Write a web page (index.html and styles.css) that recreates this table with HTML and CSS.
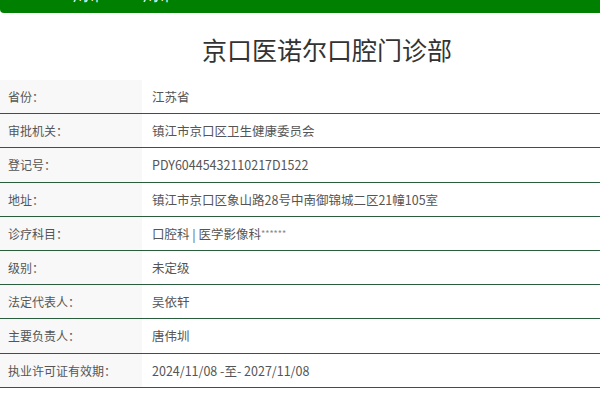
FILE: index.html
```html
<!DOCTYPE html>
<html lang="zh-CN">
<head>
<meta charset="utf-8">
<title>京口医诺尔口腔门诊部</title>
<link rel="stylesheet" href="styles.css">
</head>
<body>
<header class="topbar">
  <nav class="nav">
    <span class="nav-item nav-a">川川</span>
    <span class="nav-item nav-b">川川</span>
  </nav>
</header>
<h1 class="title">京口医诺尔口腔门诊部</h1>
<table class="info">
  <tbody>
    <tr><th>省份：</th><td>江苏省</td></tr>
    <tr><th>审批机关：</th><td>镇江市京口区卫生健康委员会</td></tr>
    <tr><th>登记号：</th><td>PDY60445432110217D1522</td></tr>
    <tr><th>地址：</th><td>镇江市京口区象山路28号中南御锦城二区21幢105室</td></tr>
    <tr><th>诊疗科目：</th><td>口腔科 | 医学影像科<span class="stars">******</span></td></tr>
    <tr><th>级别：</th><td>未定级</td></tr>
    <tr><th>法定代表人：</th><td>吴依轩</td></tr>
    <tr><th>主要负责人：</th><td>唐伟圳</td></tr>
    <tr><th>执业许可证有效期：</th><td>2024/11/08 -至- 2027/11/08</td></tr>
  </tbody>
</table>
</body>
</html>
```
FILE: styles.css
```css
html, body {
  margin: 0;
  padding: 0;
  background: #fff;
}
body {
  font-family: "Noto Sans CJK SC", "Noto Sans", sans-serif;
  color: #555;
  width: 600px;
  overflow: hidden;
}
.topbar {
  height: 13px;
  background: #008000;
  border-bottom-left-radius: 4px;
  overflow: hidden;
}
.nav {
  display: flex;
  margin-top: -13px;
}
.nav-item {
  color: #fff;
  font-size: 14px;
  line-height: 16px;
  letter-spacing: -2px;
}
.nav-a { margin-left: 73px; }
.nav-b { margin-left: 46px; }
.title {
  margin: 0;
  height: 67px;
  box-sizing: border-box;
  padding: 20px 0 0 202px;
  font-size: 25px;
  line-height: 32px;
  font-weight: 400;
  color: #333;
  white-space: nowrap;
}
.info {
  width: 100%;
  border-collapse: collapse;
  font-size: 12px;
  line-height: 17.2px;
}
.info th,
.info td {
  height: 17.2px;
  padding: 8px 0 8px 0;
  border-bottom: 1px solid #2a5c3e;
  text-align: left;
  font-weight: 400;
  vertical-align: middle;
  white-space: nowrap;
}
.info th {
  width: 134px;
  padding-left: 8px;
  background: #f8f8f8;
  color: #555;
}
.info td {
  padding-left: 10px;
  font-size: 12.5px;
  color: #555;
}
.stars {
  font-size: 9px;
  color: #888;
  vertical-align: 2px;
}
```
